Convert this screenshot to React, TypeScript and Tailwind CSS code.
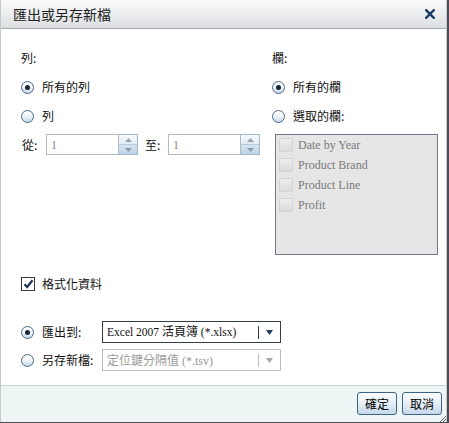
import React from "react";

const CJK = { fontFamily: '"Noto Sans CJK TC", "Noto Sans", sans-serif' };
const SERIF = { fontFamily: '"Liberation Serif", "Noto Sans CJK TC", serif' };

function Radio({ checked }: { checked?: boolean }) {
  return (
    <span className="w-[13px] h-[13px] rounded-full border border-[#4f6680] bg-linear-to-b from-white via-[#eef4fa] to-[#c3d8ec] flex items-center justify-center shrink-0">
      {checked && <span className="w-[5px] h-[5px] rounded-full bg-[#1a2633]" />}
    </span>
  );
}

function Spinner() {
  return (
    <div className="w-[19px] h-[21px] border border-l-0 border-[#a3b8cc] flex flex-col">
      <div className="flex-1 bg-linear-to-b from-[#f7fafd] to-[#e2ebf4] flex items-center justify-center border-b border-[#b9cadb]">
        <svg width="7" height="4" viewBox="0 0 7 4"><polygon points="0,4 7,4 3.5,0" fill="#98a6b4" /></svg>
      </div>
      <div className="flex-1 bg-linear-to-b from-[#d6e4f1] to-[#bdd3e7] flex items-center justify-center">
        <svg width="7" height="4" viewBox="0 0 7 4"><polygon points="0,0 7,0 3.5,4" fill="#8a9aab" /></svg>
      </div>
    </div>
  );
}

function NumInput() {
  return (
    <div className="flex">
      <div className="w-[73px] h-[21px] border border-[#b3bac2] bg-white flex items-center pl-[4px] text-[12px] text-[#8a8a8a]" style={SERIF}>
        1
      </div>
      <Spinner />
    </div>
  );
}

function Select({ children, disabled }: { children: React.ReactNode; disabled?: boolean }) {
  return (
    <div
      className={
        "w-[179px] h-[22px] border bg-white flex items-center " +
        (disabled ? "border-[#b9bdc2]" : "border-[#2f3d4d]")
      }
    >
      <span
        className={"flex-1 pl-[4px] text-[12px] whitespace-nowrap " + (disabled ? "text-[#9a9a9a]" : "text-[#111]")}
        style={SERIF}
      >
        {children}
      </span>
      <span className={"w-px h-[13px] " + (disabled ? "bg-[#b9bdc2]" : "bg-[#2f3d4d]")} />
      <span className="w-[21px] flex items-center justify-center">
        <svg width="7" height="5" viewBox="0 0 7 5">
          <polygon points="0,0 7,0 3.5,5" fill={disabled ? "#a8a8a8" : "#1d3a60"} />
        </svg>
      </span>
    </div>
  );
}

function ListItem({ label }: { label: string }) {
  return (
    <div className="h-[20px] flex items-center pl-[3px] gap-[5px]">
      <span className="w-[14px] h-[14px] border border-[#d4d4d4] rounded-[1px] bg-linear-to-b from-[#eeeeee] to-[#dadada]" />
      <span className="text-[12px] text-[#7a7a7a]" style={SERIF}>
        {label}
      </span>
    </div>
  );
}

function Button({ label }: { label: string }) {
  return (
    <div
      className="w-[40px] h-[23px] rounded-[3px] border border-[#3d6486] bg-linear-to-b from-[#fbfdff] via-[#e6eef6] to-[#c5d8ea] flex items-center justify-center text-[12px] text-black"
      style={CJK}
    >
      {label}
    </div>
  );
}

export default function App() {
  return (
    <div className="w-[449px] h-[423px] bg-[#4d4d55]" style={CJK}>
      <div className="w-[447px] h-[422px] flex flex-col border-l border-r border-[#c3cbcb] bg-white">
        {/* title bar */}
        <div className="h-[29px] shrink-0 border-b border-[#a7a9ab] bg-linear-to-b from-[#fafafa] to-[#dcdfe2] flex items-center justify-between pl-[12px] pr-[11px]">
          <span className="text-[14px] leading-[16px] text-[#222]">匯出或另存新檔</span>
          <svg width="10" height="10" viewBox="0 0 10 10">
            <path d="M1.2 1.2 L8.8 8.8 M8.8 1.2 L1.2 8.8" stroke="#1d3d66" strokeWidth="2.4" strokeLinecap="square" />
          </svg>
        </div>

        {/* body */}
        <div className="h-[357px] shrink-0 border-b border-[#c7d0d0] bg-white pl-[20px] pt-[21px] text-[12px] text-[#111]">
          <div className="flex">
            {/* left column */}
            <div className="w-[251px] flex flex-col">
              <div className="h-[16px] leading-[16px]">列:</div>
              <div className="mt-[13px] h-[16px] flex items-center gap-[8px]">
                <Radio checked />
                <span className="leading-[16px]">所有的列</span>
              </div>
              <div className="mt-[13px] h-[16px] flex items-center gap-[8px]">
                <Radio />
                <span className="leading-[16px]">列</span>
              </div>
              <div className="mt-[10px] h-[21px] flex items-center">
                <span className="w-[25px] pl-[1px] leading-[16px]">從:</span>
                <NumInput />
                <span className="ml-[7px] w-[23px] leading-[16px]">至:</span>
                <NumInput />
              </div>
            </div>
            {/* right column */}
            <div className="flex flex-col">
              <div className="h-[16px] leading-[16px]">欄:</div>
              <div className="mt-[13px] h-[16px] flex items-center gap-[8px]">
                <Radio checked />
                <span className="leading-[16px]">所有的欄</span>
              </div>
              <div className="mt-[13px] h-[16px] flex items-center gap-[8px]">
                <Radio />
                <span className="leading-[16px]">選取的欄:</span>
              </div>
              <div className="mt-[10px] ml-[3px] w-[163px] h-[121px] border border-[#737789] bg-[#e6e6e6]">
                <ListItem label="Date by Year" />
                <ListItem label="Product Brand" />
                <ListItem label="Product Line" />
                <ListItem label="Profit" />
              </div>
            </div>
          </div>

          <div className="mt-[21px] h-[16px] flex items-center gap-[7px]">
            <span className="w-[14px] h-[14px] border border-[#3a3a3a] bg-white flex items-center justify-center">
              <svg width="11" height="10" viewBox="0 0 11 10">
                <path d="M1.5 5.2 L4.2 8 L9.5 1.2" stroke="#1b3658" strokeWidth="2.2" fill="none" />
              </svg>
            </span>
            <span className="leading-[16px]">格式化資料</span>
          </div>

          <div className="mt-[29px] h-[22px] flex items-center">
            <div className="w-[81px] flex items-center gap-[8px]">
              <Radio checked />
              <span className="leading-[16px]">匯出到:</span>
            </div>
            <Select>
              <span className="text-[11.5px]">Excel 2007 </span>
              <span style={CJK}>活頁簿</span>
              <span className="text-[11.5px]"> (*.xlsx)</span>
            </Select>
          </div>
          <div className="mt-[6px] h-[22px] flex items-center">
            <div className="w-[81px] flex items-center gap-[8px]">
              <Radio />
              <span className="leading-[16px]">另存新檔:</span>
            </div>
            <Select disabled>
              <span style={CJK}>定位鍵分隔值</span>
              <span> (*.tsv)</span>
            </Select>
          </div>
        </div>

        {/* footer */}
        <div className="relative flex-1 bg-[#edf5f5] flex items-center justify-end gap-[5px] pr-[4px] pb-[1px]">
          <Button label="確定" />
          <Button label="取消" />
          <svg className="absolute right-0 bottom-0" width="7" height="7" viewBox="0 0 7 7">
            <path d="M1 7 L7 1 M4 7 L7 4" stroke="#6a6a6a" strokeWidth="1" />
          </svg>
        </div>
      </div>
    </div>
  );
}
